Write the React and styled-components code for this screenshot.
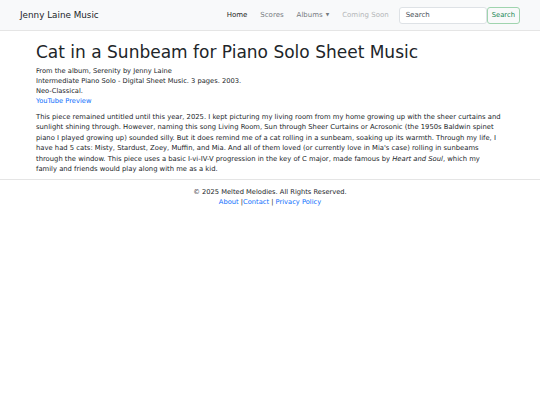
import React from 'react';
import styled, { createGlobalStyle } from 'styled-components';

const Global = createGlobalStyle`
  body {
    margin: 0;
    font-family: "DejaVu Sans", Verdana, sans-serif;
    font-size: 6.7px;
    line-height: 10px;
    color: #212529;
    background: #fff;
  }
  a { color: #0d6efd; text-decoration: none; }
`;

const Nav = styled.nav`
  display: flex;
  align-items: center;
  height: 30px;
  padding: 0 20px;
  background: #f8f9fa;
  border-bottom: 1px solid #e5e5e5;
`;

const Brand = styled.div`
  font-size: 8.8px;
  color: #212529;
  margin-right: auto;
`;

const NavList = styled.ul`
  display: flex;
  list-style: none;
  margin: 0;
  padding: 0;
  gap: 13px;
  margin-right: 10px;
`;

const NavItem = styled.li`
  font-size: 7px;
  color: ${p => (p.$active ? '#1c1f23' : p.$disabled ? '#b4b6b8' : '#767a7e')};
`;

const Caret = styled.span`
  font-size: 4.5px;
  margin-left: 3px;
  vertical-align: 1px;
`;

const SearchForm = styled.form`
  display: flex;
`;

const SearchInput = styled.div`
  width: 74px;
  height: 15px;
  padding: 0 6px;
  border: 1px solid #dee2e6;
  border-radius: 3px;
  background: #fff;
  font-size: 7px;
  line-height: 15px;
  color: #495057;
`;

const SearchButton = styled.div`
  height: 15px;
  padding: 0 4px;
  border: 1px solid #9fd4ae;
  border-radius: 3px;
  font-size: 6.8px;
  line-height: 15px;
  color: #198754;
`;

const Main = styled.main`
  padding: 9px 26px 0 36px;
`;

const Title = styled.h1`
  margin: 0 0 2px;
  font-size: 17px;
  line-height: 24px;
  font-weight: 400;
`;

const Meta = styled.div`
  margin-bottom: 6px;
`;

const Para = styled.p`
  margin: 0;
  font-size: 6.8px;
  line-height: 10.4px;
`;

const Footer = styled.footer`
  margin-top: 5px;
  border-top: 1px solid #e5e5e5;
  padding-top: 7px;
  text-align: center;
`;

export default function App() {
  return (
    <>
      <Global />
      <Nav>
        <Brand>Jenny Laine Music</Brand>
        <NavList>
          <NavItem $active>Home</NavItem>
          <NavItem>Scores</NavItem>
          <NavItem>Albums<Caret>▼</Caret></NavItem>
          <NavItem $disabled>Coming Soon</NavItem>
        </NavList>
        <SearchForm>
          <SearchInput>Search</SearchInput>
          <SearchButton>Search</SearchButton>
        </SearchForm>
      </Nav>
      <Main>
        <Title>Cat in a Sunbeam for Piano Solo Sheet Music</Title>
        <Meta>
          <div>From the album, Serenity by Jenny Laine</div>
          <div>Intermediate Piano Solo - Digital Sheet Music. 3 pages. 2003.</div>
          <div>Neo-Classical.</div>
          <div><a href="#">YouTube Preview</a></div>
        </Meta>
        <Para>
          This piece remained untitled until this year, 2025. I kept picturing my living room from my home growing up with the sheer curtains and<br />
          sunlight shining through. However, naming this song Living Room, Sun through Sheer Curtains or Acrosonic (the 1950s Baldwin spinet<br />
          piano I played growing up) sounded silly. But it does remind me of a cat rolling in a sunbeam, soaking up its warmth. Through my life, I<br />
          have had 5 cats: Misty, Stardust, Zoey, Muffin, and Mia. And all of them loved (or currently love in Mia's case) rolling in sunbeams<br />
          through the window. This piece uses a basic I-vi-IV-V progression in the key of C major, made famous by <em>Heart and Soul</em>, which my<br />
          family and friends would play along with me as a kid.
        </Para>
      </Main>
      <Footer>
        <div>© 2025 Melted Melodies. All Rights Reserved.</div>
        <div><a href="#">About</a> |<a href="#">Contact</a> | <a href="#">Privacy Policy</a></div>
      </Footer>
    </>
  );
}
